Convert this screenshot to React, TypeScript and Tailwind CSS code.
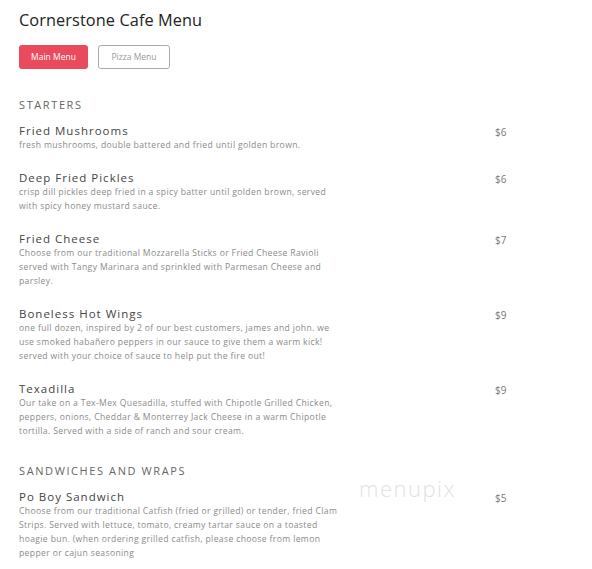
import React from 'react';

type Item = { name: string; lines: string[]; price: string };

// lines are broken where the printed menu breaks them
const starters: Item[] = [
  {
    name: 'Fried Mushrooms',
    lines: ['fresh mushrooms, double battered and fried until golden brown.'],
    price: '$6',
  },
  {
    name: 'Deep Fried Pickles',
    lines: [
      'crisp dill pickles deep fried in a spicy batter until golden brown, served',
      'with spicy honey mustard sauce.',
    ],
    price: '$6',
  },
  {
    name: 'Fried Cheese',
    lines: [
      'Choose from our traditional Mozzarella Sticks or Fried Cheese Ravioli',
      'served with Tangy Marinara and sprinkled with Parmesan Cheese and',
      'parsley.',
    ],
    price: '$7',
  },
  {
    name: 'Boneless Hot Wings',
    lines: [
      'one full dozen, inspired by 2 of our best customers, james and john. we',
      'use smoked habañero peppers in our sauce to give them a warm kick!',
      'served with your choice of sauce to help put the fire out!',
    ],
    price: '$9',
  },
  {
    name: 'Texadilla',
    lines: [
      'Our take on a Tex-Mex Quesadilla, stuffed with Chipotle Grilled Chicken,',
      'peppers, onions, Cheddar & Monterrey Jack Cheese in a warm Chipotle',
      'tortilla. Served with a side of ranch and sour cream.',
    ],
    price: '$9',
  },
];

const sandwiches: Item[] = [
  {
    name: 'Po Boy Sandwich',
    lines: [
      'Choose from our traditional Catfish (fried or grilled) or tender, fried Clam',
      'Strips. Served with lettuce, tomato, creamy tartar sauce on a toasted',
      'hoagie bun. (when ordering grilled catfish, please choose from lemon',
      'pepper or cajun seasoning',
    ],
    price: '$5',
  },
];

function MenuItem({ item }: { item: Item }) {
  return (
    <div className="flex items-start">
      <div className="w-[336px]">
        <h3 className="text-[11.5px] leading-[14px] tracking-[1px] text-[#444]">{item.name}</h3>
        <p className="text-[8.6px] leading-[14px] tracking-[0.36px] text-[#8a8a8a]">
          {item.lines.map((l, idx) => (
            <span key={idx} className="block whitespace-nowrap">
              {l}
            </span>
          ))}
        </p>
      </div>
      <div className="ml-[140px] pt-[1px] text-[10px] leading-[14px] text-[#777]">{item.price}</div>
    </div>
  );
}

function Section({ title, items }: { title: string; items: Item[] }) {
  return (
    <div>
      <h2 className="text-[11px] leading-[14px] tracking-[1.6px] text-[#666] uppercase">{title}</h2>
      <div className="mt-[12px] flex flex-col gap-[19px]">
        {items.map(i => (
          <MenuItem key={i.name} item={i} />
        ))}
      </div>
    </div>
  );
}

export default function App() {
  return (
    <div
      className="relative min-h-[569px] bg-white px-[19px] pt-[9px]"
      style={{ fontFamily: '"Open Sans", Arial, sans-serif' }}
    >
      <h1 className="text-[16.3px] leading-[22px] tracking-[0.1px] text-[#222]">Cornerstone Cafe Menu</h1>

      <div className="mt-[14px] flex gap-[10px]">
        <button className="h-[24px] w-[69px] rounded-[3px] bg-[#e94b5c] text-[8.5px] text-white">
          Main Menu
        </button>
        <button className="h-[24px] w-[72px] rounded-[3px] border border-[#aaa] bg-white text-[8.5px] text-[#999]">
          Pizza Menu
        </button>
      </div>

      <div className="mt-[29px] flex flex-col gap-[26px]">
        <Section title="Starters" items={starters} />
        <Section title="Sandwiches and Wraps" items={sandwiches} />
      </div>

      <div className="pointer-events-none absolute left-[359px] top-[476px] text-[22px] font-light leading-[24px] tracking-[1.5px] text-[#e2e2e2]">
        menupix
      </div>
    </div>
  );
}
